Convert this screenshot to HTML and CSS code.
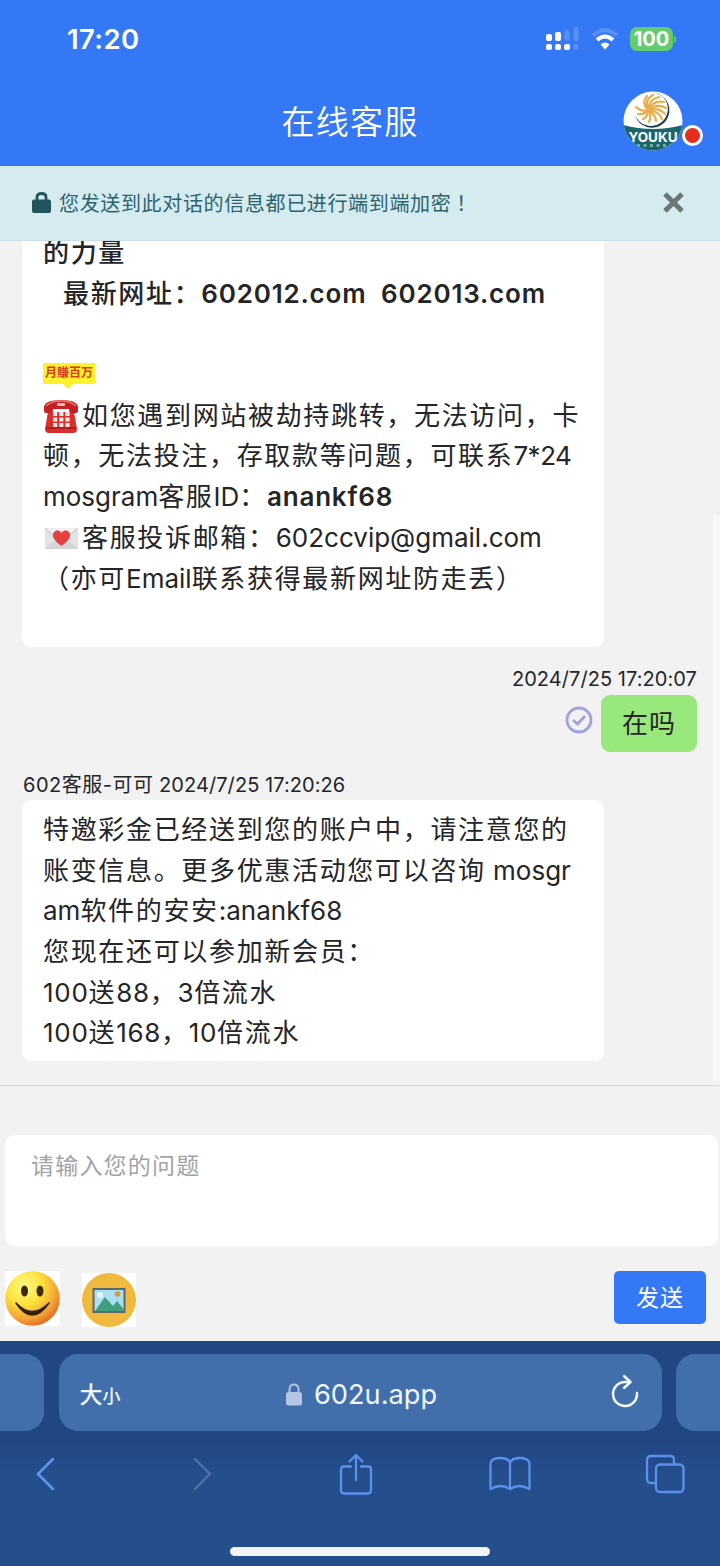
FILE: index.html
```html
<!DOCTYPE html>
<html lang="zh-CN">
<head>
    <meta charset="UTF-8">
    <meta name="viewport" content="width=device-width, initial-scale=1.0">
    <title>在线客服</title>
    <link rel="stylesheet" href="styles.css">
</head>
<body>
<header class="header">
    <div class="status-bar">
        <span class="clock">17:20</span>
        <div class="status-icons">
            <svg class="signal" width="34" height="24" viewBox="0 0 34 24">
                <g fill="#fff">
                    <rect x="0" y="7" width="6" height="7" rx="2"/>
                    <rect x="9" y="5" width="6" height="9" rx="2"/>
                    <rect x="0" y="17" width="6" height="6" rx="2"/>
                    <rect x="9" y="17" width="6" height="6" rx="2"/>
                    <rect x="18" y="17" width="6" height="6" rx="2"/>
                </g>
                <g fill="#5990f8">
                    <rect x="18.500" y="3" width="5" height="11" rx="2"/>
                    <rect x="27.500" y="0" width="5" height="14" rx="2"/>
                    <rect x="27.500" y="17" width="5" height="6" rx="2"/>
                </g>
            </svg>
            <svg class="wifi" width="28" height="22" viewBox="0 0 28 22" fill="none">
                <path d="M2 7.500Q14 -3 26 7.500" stroke="#5990f8" stroke-width="4"/>
                <path d="M6 12Q14 5 22 12" stroke="#fff" stroke-width="4"/>
                <path d="M9.500 16.500Q14 12.500 18.500 16.500L14 21.500Z" fill="#fff"/>
            </svg>
            <span class="battery">100</span>
            <i class="battery-tip"></i>
        </div>
    </div>
    <div class="title-bar">
        <h1>在线客服</h1>
        <div class="avatar">
            <svg width="60" height="60" viewBox="0 0 60 60">
                <defs>
                    <clipPath id="round"><circle cx="30" cy="30" r="29.500"/></clipPath>
                </defs>
                <g clip-path="url(#round)">
                    <rect width="60" height="60" fill="#fdfefe"/>
                    <path d="M0 34Q30 42 60 34V60H0Z" fill="#1b666b"/>
                    <path d="M32 2A17.500 17.500 0 1 1 12 24A17 17 0 1 0 40 6Q36 3 32 2Z" fill="#153c42"/>
                    <g fill="none" stroke="#e9ae4b" stroke-width="2.200" stroke-linecap="round">
                        <path d="M25 19Q18 12 24 5"/>
                        <path d="M25 19Q21 9 30 4"/>
                        <path d="M25 19Q26 8 36 6"/>
                        <path d="M25 19Q30 9 41 11"/>
                        <path d="M25 19Q34 12 43 17"/>
                        <path d="M25 19Q36 16 42 23"/>
                        <path d="M25 19Q36 20 39 28"/>
                        <path d="M25 19Q33 24 33 30"/>
                        <path d="M25 19Q29 26 26 31"/>
                        <path d="M25 19Q25 26 20 28"/>
                        <path d="M25 19Q21 24 15 23"/>
                        <path d="M25 19Q18 21 13 16"/>
                    </g>
                    <path d="M14 54.500H47" stroke="#76aaa5" stroke-width="3" stroke-dasharray="3 3.500"/>
                </g>
                <text x="30" y="50.500" class="logo-text" textLength="49" lengthAdjust="spacingAndGlyphs">YOUKU</text>
            </svg>
            <i class="online-dot"></i>
        </div>
    </div>
</header>

<div class="notice">
    <svg width="19" height="21" viewBox="0 0 19 21">
        <path d="M5 9V5Q5 1.500 9.500 1.500T14 5V9" fill="none" stroke="#22545d" stroke-width="2.800"/>
        <rect x="0" y="7.500" width="19" height="13.500" rx="2" fill="#22545d"/>
    </svg>
    <span class="notice-text">您发送到此对话的信息都已进行端到端加密<span class="mark" lang="zh-TW">！</span></span>
    <svg class="close" width="21" height="21" viewBox="0 0 21 21">
        <path d="M2 2L19 19M19 2L2 19" stroke="#69777b" stroke-width="5"/>
    </svg>
</div>

<main class="chat">
    <div class="bubble bubble-links">
        <p class="strong">的力量</p>
        <p class="strong indent">最新网址：<span class="latin-bold">602012.com&nbsp; 602013.com</span></p>
        <p></p>
        <p><span class="sticker">月賺百万</span></p>
        <p><svg class="emoji" width="36" height="36" viewBox="0 0 36 36">
            <path d="M5 14H31L34 31Q34 35 30 35H6Q2 35 2 31Z" fill="#db2f2c"/>
            <path d="M1 9Q2 2 18 2T35 9V13Q35 15 33 15H28Q26 15 26 11H10Q10 15 8 15H3Q1 15 1 13Z" fill="#c81f24"/>
            <path d="M3 8Q8 3 18 3T33 8" fill="none" stroke="#ef7770" stroke-width="1.500"/>
            <rect x="14" y="5" width="8" height="3" rx="1" fill="#f3bcb5"/>
            <path d="M3 30H33" stroke="#a5181e" stroke-width="1.500"/>
            <g stroke="#fbe8e4" stroke-width="4" stroke-dasharray="4.200 2">
                <path d="M10 16H27"/><path d="M10 21.500H27"/><path d="M10 27H27"/>
            </g>
        </svg>如您遇到网站被劫持跳转，无法访问，卡</p>
        <p>顿，无法投注，存取款等问题，可联系<span class="latin tight">7*24</span></p>
        <p><span class="latin">mosgram</span>客服<span class="latin">ID</span>：<span class="latin-bold">anankf68</span></p>
        <p><svg class="emoji" width="36" height="24" viewBox="0 0 36 24">
            <rect x="2" y="2" width="33" height="21" fill="#e3e3e6"/>
            <path d="M2 23L15 11H21L35 23Z" fill="#d3d4d8"/>
            <path d="M2 2L18 16L35 2" fill="#efeff1" stroke="#bfc1c6" stroke-width="1"/>
            <path d="M18.500 20C9 13 9 9 11 6Q15 2 18.500 7Q22 2 26 6C28 9 28 13 18.500 20Z" fill="#e5403f"/>
        </svg>客服投诉邮箱：<span class="latin">602ccvip@gmail.com</span></p>
        <p>（亦可<span class="latin">Email</span>联系获得最新网址防走丢）</p>
        <p></p>
    </div>

    <div class="mine">
        <span class="meta">2024/7/25 17:20:07</span>
        <div class="mine-row">
            <svg width="28" height="28" viewBox="0 0 28 28" fill="none" stroke="#a3a1dd" stroke-width="2.800">
                <circle cx="14" cy="14" r="12"/>
                <path d="M8 14L12.500 18L20 10"/>
            </svg>
            <div class="bubble-green">在吗</div>
        </div>
    </div>

    <div class="meta meta-left"><span class="agent">602客服-可可</span> 2024/7/25 17:20:26</div>
    <div class="bubble">
        <p>特邀彩金已经送到您的账户中，请注意您的</p>
        <p>账变信息。更多优惠活动您可以咨询<span class="latin"> mosgr</span></p>
        <p><span class="latin">am</span>软件的安安<span class="latin">:anankf68</span></p>
        <p>您现在还可以参加新会员：</p>
        <p><span class="number">100</span>送<span class="number">88</span>，<span class="number">3</span>倍流水</p>
        <p><span class="number">100</span>送<span class="number">168</span>，<span class="number">10</span>倍流水</p>
    </div>
    <i class="scrollbar"></i>
</main>

<footer class="composer">
    <div class="question">请输入您的问题</div>
    <div class="tools">
        <span class="tool">
            <svg width="55" height="55" viewBox="0 0 55 55">
                <defs>
                    <radialGradient id="face" cx="35%" cy="28%" r="75%">
                        <stop offset="0" stop-color="#fffb87"/>
                        <stop offset=".45" stop-color="#fbe13a"/>
                        <stop offset=".8" stop-color="#f4a137"/>
                        <stop offset="1" stop-color="#e46f22"/>
                    </radialGradient>
                </defs>
                <circle cx="27.500" cy="27.500" r="27.300" fill="url(#face)"/>
                <ellipse cx="19.500" cy="20" rx="3.500" ry="5.500" fill="#3c2a14"/>
                <ellipse cx="35" cy="20" rx="3.500" ry="5.500" fill="#3c2a14"/>
                <path d="M11 32Q27 56 44 32Q27 49 11 32Z" fill="#33200e" stroke="#33200e" stroke-width="1.500" stroke-linejoin="round"/>
            </svg>
        </span>
        <span class="tool tool-picture">
            <svg width="54" height="54" viewBox="0 0 54 54">
                <circle cx="27" cy="27" r="27" fill="#f0b93f"/>
                <rect x="11.500" y="16" width="31" height="23" fill="#a9dff0" stroke="#5d6668" stroke-width="2"/>
                <circle cx="18" cy="22" r="3" fill="#e6f7fc"/>
                <circle cx="35.500" cy="21" r="2.800" fill="#d99a3b"/>
                <path d="M13 38L23 24L31 33L35 28L41.500 36V38Z" fill="#409f7c"/>
            </svg>
        </span>
        <button type="button" class="send">发送</button>
    </div>
</footer>

<nav class="browser">
    <div class="tabs">
        <div class="tab-side tab-prev"></div>
        <div class="address">
            <span class="text-size">大<small>小</small></span>
            <span class="url">
                <svg width="16" height="23" viewBox="0 0 16 23">
                    <path d="M3.500 10V6.500Q3.500 1.500 8 1.500T12.500 6.500V10" fill="none" stroke="#b4c5e6" stroke-width="2"/>
                    <rect x="0" y="9" width="16" height="13.500" rx="2.500" fill="#b4c5e6"/>
                </svg>
                602u.app
            </span>
            <svg class="reload" width="28" height="34" viewBox="0 0 28 34" fill="none" stroke="#eef6ff" stroke-width="2.500" stroke-linecap="round" stroke-linejoin="round">
                <path d="M26 19A12 12 0 1 1 14 8H19"/>
                <path d="M13 2L19.500 8L13 14"/>
            </svg>
        </div>
        <div class="tab-side tab-next"></div>
    </div>
    <div class="actions">
        <span><svg width="20" height="32" viewBox="0 0 20 32" fill="none" stroke="#5e97f0" stroke-width="2.500" stroke-linecap="round"><path d="M17 1L2 16L17 31"/></svg></span>
        <span class="forward"><svg width="20" height="32" viewBox="0 0 20 32" fill="none" stroke="#4d74a5" stroke-width="2.300" stroke-linecap="round"><path d="M2 1L17 16L2 31"/></svg></span>
        <span><svg width="34" height="42" viewBox="0 0 34 42" fill="none" stroke="#5c90ed" stroke-width="2.300" stroke-linecap="round" stroke-linejoin="round">
            <path d="M12 13.500H5Q2 13.500 2 16.500V37Q2 40.500 5 40.500H29Q32 40.500 32 37V16.500Q32 13.500 29 13.500H22"/>
            <path d="M17 27V2M10.500 8.500L17 2L23.500 8.500"/>
        </svg></span>
        <span><svg width="42" height="36" viewBox="0 0 42 36" fill="none" stroke="#5c90ed" stroke-width="2.300" stroke-linejoin="round">
            <path d="M21 33Q12 27 1.500 33V7Q3 2 11 2T21 6.500Q23 2 31 2T40.500 7V33Q30 27 21 33ZM21 6.500V33"/>
        </svg></span>
        <span><svg width="40" height="40" viewBox="0 0 40 40" fill="none" stroke="#5c90ed" stroke-width="2.300">
            <path d="M10 29H6Q2 29 2 25V6Q2 2 6 2H25Q29 2 29 6V10"/>
            <rect x="11" y="10.500" width="27.500" height="27.500" rx="4"/>
        </svg></span>
    </div>
    <div class="home-line"></div>
</nav>
</body>
</html>
```
FILE: styles.css
```css
* {
    box-sizing: border-box;
}

body {
    margin: 0;
    width: 720px;
    height: 1566px;
    display: flex;
    flex-direction: column;
    overflow: hidden;
    background-color: #f2f2f3;
    font-family: Inter, "Noto Sans CJK SC", sans-serif;
    color: #242528;
}

svg {
    display: block;
    flex-shrink: 0;
}

.header {
    height: 166px;
    flex-shrink: 0;
    background-color: #3478f6;
    color: #fff;
}

.status-bar {
    display: flex;
    justify-content: space-between;
    align-items: center;
    height: 78px;
    padding: 0 44px 0 67px;
}

.clock {
    font-size: 27.5px;
    font-weight: 600;
    letter-spacing: 0.4px;
}

.status-icons {
    display: flex;
    align-items: center;
}

.wifi {
    margin: 0 11px 0 11px;
}

.battery {
    width: 43px;
    height: 24px;
    border-radius: 7px;
    background-color: #65cb70;
    font-size: 20px;
    font-weight: 700;
    line-height: 24px;
    text-align: center;
}

.battery-tip {
    width: 2px;
    height: 7px;
    margin-left: 1px;
    border-radius: 0 2px 2px 0;
    background-color: #65cb70;
}

.title-bar {
    position: relative;
    height: 88px;
    padding-right: 20px;
    text-align: center;
}

h1 {
    margin: 0;
    font-size: 33px;
    font-weight: 350;
    letter-spacing: 1.3px;
    line-height: 88px;
}

.avatar {
    position: absolute;
    top: 13px;
    right: 37px;
}

.logo-text {
    font: 700 13px Inter, sans-serif;
    fill: #fff;
    text-anchor: middle;
}

.online-dot {
    position: absolute;
    left: 59px;
    top: 34px;
    width: 21px;
    height: 21px;
    border: 3px solid #fff;
    border-radius: 50%;
    background-color: #e72e1c;
}

.notice {
    display: flex;
    align-items: center;
    height: 75px;
    flex-shrink: 0;
    padding: 0 36px 2px 32px;
    border-bottom: 1px solid #c8e1e7;
    background-color: #d5ebf0;
    color: #2c646d;
}

.notice-text {
    margin-left: 8px;
    font-size: 20px;
    letter-spacing: 0.65px;
}

.mark {
    font-family: "Noto Sans CJK TC", sans-serif;
}

.close {
    margin-left: auto;
}

.chat {
    position: relative;
    display: flex;
    flex-direction: column;
    justify-content: flex-end;
    height: 845px;
    flex-shrink: 0;
    overflow: hidden;
    padding: 0 23px 24px 22px;
    border-bottom: 1px solid #d2d3d5;
}

.bubble {
    width: 582px;
    flex-shrink: 0;
    padding: 10px 0 7px 21px;
    border-radius: 9px;
    background-color: #fff;
    font-size: 26px;
    letter-spacing: 1.67px;
    white-space: nowrap;
}

.bubble-links {
    padding-bottom: 7px;
}

.bubble p {
    display: flex;
    align-items: center;
    height: 40.7px;
    margin: 0;
    line-height: 40.7px;
    white-space: pre;
}

.bubble .strong {
    font-weight: 500;
}

.bubble .indent {
    padding-left: 20px;
}

.latin {
    letter-spacing: 0;
}

.tight {
    letter-spacing: -0.5px;
}

.number {
    letter-spacing: 0.7px;
}

.latin-bold {
    font-weight: 600;
    letter-spacing: 0.8px;
}

.emoji {
    margin-right: 3px;
}

.sticker {
    position: relative;
    width: 52px;
    height: 21px;
    margin-bottom: 3px;
    background-color: #fff22d;
    color: #dc3a18;
    font-size: 12px;
    font-weight: 700;
    letter-spacing: 0;
    line-height: 20px;
    text-align: center;
}

.sticker::after {
    content: "";
    position: absolute;
    left: 20px;
    top: 21px;
    border: 5px solid transparent;
    border-top-color: #fff22d;
}

.meta {
    font-size: 20px;
    letter-spacing: 0.06px;
    line-height: 30px;
}

.agent {
    letter-spacing: 0.5px;
}

.mine {
    display: flex;
    flex-direction: column;
    align-items: flex-end;
    margin-top: 17px;
}

.mine-row {
    display: flex;
    align-items: center;
    gap: 8px;
    margin-top: 1px;
}

.mine-row svg {
    margin-bottom: 7px;
}

.bubble-green {
    width: 96px;
    height: 57px;
    border-radius: 9px;
    background-color: #98e87b;
    font-size: 26px;
    letter-spacing: 1px;
    line-height: 57px;
    text-align: center;
}

.meta-left {
    margin-top: 18px;
    padding-left: 1px;
}

.scrollbar {
    position: absolute;
    right: 0;
    top: 274px;
    width: 7px;
    height: 566px;
    background-color: #f8f8f9;
}

.composer {
    height: 255px;
    flex-shrink: 0;
    padding: 49px 2px 0 5px;
}

.question {
    height: 111px;
    padding: 15px 26px;
    border-radius: 9px;
    background-color: #fff;
    color: #a2a3a6;
    font-size: 23px;
    letter-spacing: 1.2px;
    line-height: 33px;
}

.tools {
    display: flex;
    align-items: flex-start;
    padding: 25px 12px 0 0;
}

.tool {
    background-color: #fff;
}

.tool-picture {
    margin: 2px 0 0 22px;
}

.send {
    width: 92px;
    height: 53px;
    margin-left: auto;
    padding: 0 0 3px;
    border: none;
    border-radius: 5px;
    background-color: #3478f6;
    color: #fff;
    font-family: inherit;
    font-size: 23px;
    letter-spacing: 1px;
}

.browser {
    height: 225px;
    flex-shrink: 0;
    padding-top: 13px;
    background: linear-gradient(#204783, #214684 45%, #254e8d 60%);
}

.tabs {
    display: flex;
    justify-content: space-between;
    height: 77px;
}

.tab-side {
    width: 44px;
    background-color: #426fac;
}

.tab-prev {
    border-radius: 0 19px 19px 0;
}

.tab-next {
    border-radius: 19px 0 0 19px;
}

.address {
    display: flex;
    justify-content: space-between;
    align-items: center;
    width: 603px;
    padding: 0 23px 0 21px;
    border-radius: 19px;
    background-color: #426fac;
    color: #eef6ff;
}

.text-size {
    width: 60px;
    font-size: 23px;
    font-weight: 500;
}

.text-size small {
    font-size: 18px;
}

.url {
    display: flex;
    align-items: center;
    gap: 12px;
    padding-top: 3px;
    font-size: 27.2px;
}

.reload {
    margin: 0 0 3px 27px;
}

.actions {
    display: flex;
    justify-content: space-between;
    align-items: center;
    height: 86px;
    padding: 0 33px 0 24px;
}

.actions span {
    display: flex;
    justify-content: center;
    width: 44px;
}

.actions .forward {
    padding-left: 4px;
}

.home-line {
    width: 260px;
    height: 9px;
    margin: 30px auto 0;
    border-radius: 5px;
    background-color: #f2f3f3;
}
```
